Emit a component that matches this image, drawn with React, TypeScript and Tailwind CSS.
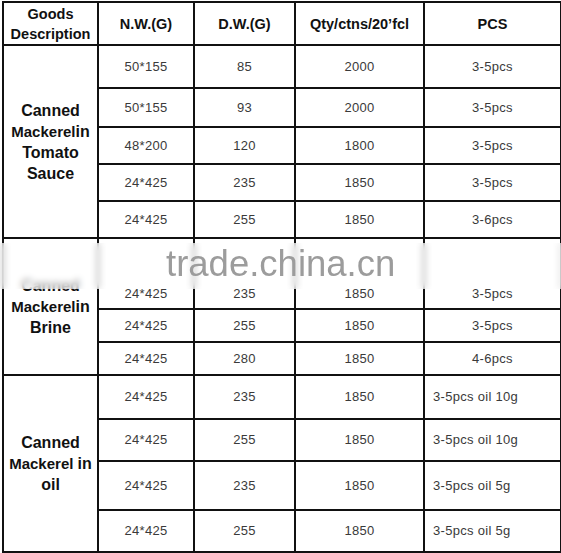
import React from 'react';

type Row = { nw: string; dw: string; qty: string; pcs: string; h: number; left?: boolean; low?: boolean };

const groups: { label: React.ReactNode; rows: Row[] }[] = [
    {
        label: (
            <>
                <div>Canned</div>
                <div><span className="text-[15px]">Mackerel</span>in</div>
                <div>Tomato</div>
                <div>Sauce</div>
            </>
        ),
        rows: [
            { nw: '50*155', dw: '85', qty: '2000', pcs: '3-5pcs', h: 43 },
            { nw: '50*155', dw: '93', qty: '2000', pcs: '3-5pcs', h: 39 },
            { nw: '48*200', dw: '120', qty: '1800', pcs: '3-5pcs', h: 37 },
            { nw: '24*425', dw: '235', qty: '1850', pcs: '3-5pcs', h: 37 },
            { nw: '24*425', dw: '255', qty: '1850', pcs: '3-6pcs', h: 37 },
        ],
    },
    {
        label: (
            <>
                <div>Canned</div>
                <div><span className="text-[15px]">Mackerel</span>in</div>
                <div>Brine</div>
            </>
        ),
        rows: [
            { nw: '24*425', dw: '235', qty: '1850', pcs: '3-5pcs', h: 71, low: true },
            { nw: '24*425', dw: '255', qty: '1850', pcs: '3-5pcs', h: 33 },
            { nw: '24*425', dw: '280', qty: '1850', pcs: '4-6pcs', h: 33 },
        ],
    },
    {
        label: (
            <>
                <div>Canned</div>
                <div><span className="text-[15px]">Mackerel </span>in</div>
                <div>oil</div>
            </>
        ),
        rows: [
            { nw: '24*425', dw: '235', qty: '1850', pcs: '3-5pcs oil 10g', h: 44, left: true },
            { nw: '24*425', dw: '255', qty: '1850', pcs: '3-5pcs oil 10g', h: 42, left: true },
            { nw: '24*425', dw: '235', qty: '1850', pcs: '3-5pcs oil 5g', h: 49, left: true },
            { nw: '24*425', dw: '255', qty: '1850', pcs: '3-5pcs oil 5g', h: 42, left: true },
        ],
    },
];

export default function App() {
    const cell = 'border-2 border-[#111] text-[13px] tracking-[0.3px] text-[#3a3a3a] p-0';
    const head = 'border-2 border-[#111] text-[14.5px] font-bold text-[#111] leading-[20px] p-0';

    return (
        <div className="relative w-[561px] h-[553px] bg-white overflow-hidden font-['Liberation_Sans',Arial,sans-serif]">
            <div className="pl-[2px] pt-[1px]">
                <table className="table-fixed border-collapse w-[558px]">
                    <colgroup>
                        <col className="w-[95px]" />
                        <col className="w-[96px]" />
                        <col className="w-[101px]" />
                        <col className="w-[129px]" />
                        <col className="w-[137px]" />
                    </colgroup>
                    <thead>
                        <tr className="h-[43px]">
                            <th className={head}>Goods<br />Description</th>
                            <th className={head}>N.W.(G)</th>
                            <th className={head}>D.W.(G)</th>
                            <th className={head}>Qty/ctns/20’fcl</th>
                            <th className={head}>PCS</th>
                        </tr>
                    </thead>
                    <tbody>
                        {groups.map((g, gi) =>
                            g.rows.map((r, ri) => (
                                <tr key={gi + '-' + ri} style={{ height: r.h }}>
                                    {ri === 0 && (
                                        <td
                                            rowSpan={g.rows.length}
                                            className="border-2 border-[#111] text-center text-[16px] font-bold text-[#111] leading-[21px] p-0"
                                        >
                                            {g.label}
                                        </td>
                                    )}
                                    <td className={`${cell} text-center ${r.low ? 'align-bottom pb-[5px]' : ''}`}>{r.nw}</td>
                                    <td className={`${cell} text-center ${r.low ? 'align-bottom pb-[5px]' : ''}`}>{r.dw}</td>
                                    <td className={`${cell} text-center ${r.low ? 'align-bottom pb-[5px]' : ''}`}>{r.qty}</td>
                                    <td className={`${cell} ${r.left ? 'text-left pl-[8px]' : 'text-center'} ${r.low ? 'align-bottom pb-[5px]' : ''}`}>{r.pcs}</td>
                                </tr>
                            ))
                        )}
                    </tbody>
                </table>
            </div>

            {/* watermark */}
            <div className="absolute left-0 top-[243px] w-[561px] h-[46px] bg-white/60 backdrop-blur-[3px]" />
            <div className="absolute left-[166px] top-[242px] text-[36.5px] leading-[44px] text-[#9c9c9c] whitespace-nowrap">
                trade.china.cn
            </div>
        </div>
    );
}
